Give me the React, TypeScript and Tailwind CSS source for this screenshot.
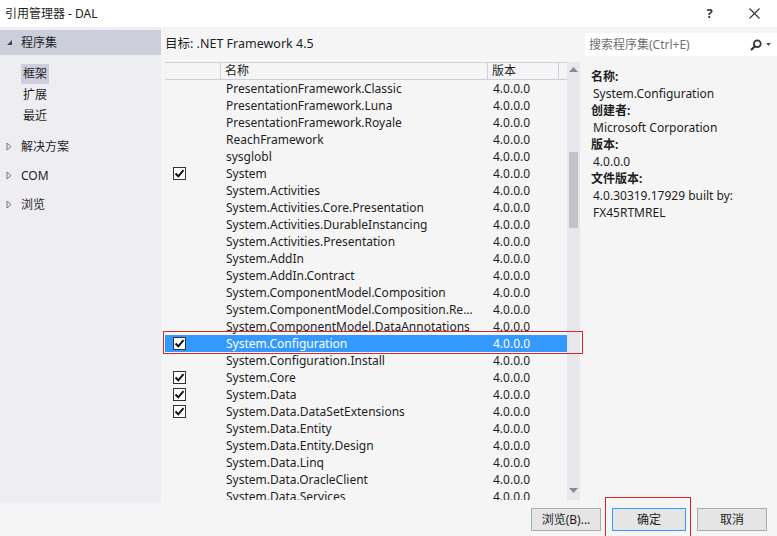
import React from "react";

const FONT = "'Noto Sans', 'Noto Sans CJK SC', sans-serif";

type Row = { name: string; checked?: boolean; selected?: boolean };

const ROWS: Row[] = [
  { name: "PresentationFramework.Classic" },
  { name: "PresentationFramework.Luna" },
  { name: "PresentationFramework.Royale" },
  { name: "ReachFramework" },
  { name: "sysglobl" },
  { name: "System", checked: true },
  { name: "System.Activities" },
  { name: "System.Activities.Core.Presentation" },
  { name: "System.Activities.DurableInstancing" },
  { name: "System.Activities.Presentation" },
  { name: "System.AddIn" },
  { name: "System.AddIn.Contract" },
  { name: "System.ComponentModel.Composition" },
  { name: "System.ComponentModel.Composition.Re..." },
  { name: "System.ComponentModel.DataAnnotations" },
  { name: "System.Configuration", checked: true, selected: true },
  { name: "System.Configuration.Install" },
  { name: "System.Core", checked: true },
  { name: "System.Data", checked: true },
  { name: "System.Data.DataSetExtensions", checked: true },
  { name: "System.Data.Entity" },
  { name: "System.Data.Entity.Design" },
  { name: "System.Data.Linq" },
  { name: "System.Data.OracleClient" },
  { name: "System.Data.Services" },
];

function CheckBox() {
  return (
    <div className="flex h-[13px] w-[13px] items-center justify-center border border-[#333] bg-white">
      <svg width="11" height="11" viewBox="0 0 11 11">
        <path d="M1.5 5.5 L4.3 8.3 L9.5 2.2" fill="none" stroke="#111" strokeWidth="2" />
      </svg>
    </div>
  );
}

function Expanded() {
  return (
    <svg width="7" height="7" viewBox="0 0 7 7">
      <path d="M6 1 L6 6 L1 6 Z" fill="#444" />
    </svg>
  );
}

function Collapsed() {
  return (
    <svg width="6" height="9" viewBox="0 0 6 9">
      <path d="M1 1 L5 4.5 L1 8 Z" fill="none" stroke="#777" strokeWidth="1" />
    </svg>
  );
}

export default function App() {
  return (
    <div
      className="relative flex h-[536px] w-[777px] flex-col overflow-hidden bg-[#f5f5f5] text-[12px] text-[#1e1e1e]"
      style={{ fontFamily: FONT }}
    >
      {/* title bar */}
      <div className="flex h-[27px] items-center bg-white pl-[5px]">
        <span className="flex-1 leading-none">引用管理器 - DAL</span>
        <span className="w-[45px] text-center text-[13px] font-bold text-[#333]">?</span>
        <span className="flex w-[45px] justify-center">
          <svg width="11" height="11" viewBox="0 0 11 11">
            <path d="M0.5 0.5 L10.5 10.5 M10.5 0.5 L0.5 10.5" stroke="#333" strokeWidth="1.1" />
          </svg>
        </span>
      </div>

      <div className="flex h-[476px]">
        {/* left tree */}
        <div className="flex w-[161px] flex-col bg-[#eeeef2]">
          <div className="mt-[3px] flex h-[25px] items-center gap-[8px] bg-[#cccedb] pl-[6px]">
            <Expanded />
            <span>程序集</span>
          </div>
          <div className="mt-[9px] flex flex-col pl-[21px]">
            <span className="flex h-[20px] w-[28px] items-center justify-center bg-[#cccedb]">框架</span>
            <span className="flex h-[21px] items-center pl-[2px]">扩展</span>
            <span className="flex h-[21px] items-center pl-[2px]">最近</span>
          </div>
          <div className="mt-[6px] flex flex-col">
            {["解决方案", "COM", "浏览"].map((t) => (
              <div key={t} className="flex h-[29px] items-center gap-[9px] pl-[6px]">
                <Collapsed />
                <span>{t}</span>
              </div>
            ))}
          </div>
        </div>

        {/* middle list */}
        <div className="flex w-[422px] flex-col">
          <div className="flex h-[35px] items-center pl-[4px] text-[12.5px]">目标: .NET Framework 4.5</div>
          <div className="flex h-[438px] pl-[4px]">
            <div className="flex flex-1 flex-col overflow-hidden border-t border-[#cccedb]">
              <div className="flex h-[17px] shrink-0 border-b border-[#cccedb] leading-[16px]">
                <div className="w-[56px] border-r border-[#cccedb]" />
                <div className="w-[267px] border-r border-[#cccedb] pl-[4px]">名称</div>
                <div className="w-[71px] border-r border-[#cccedb] pl-[4px]">版本</div>
              </div>
              {ROWS.map((r) => (
                <div
                  key={r.name}
                  className={
                    r.selected
                      ? "flex h-[17px] shrink-0 items-center bg-[#3399ff] text-white"
                      : "flex h-[17px] shrink-0 items-center"
                  }
                >
                  <div className="flex w-[57px] pl-[8px]">{r.checked ? <CheckBox /> : null}</div>
                  <div className="w-[267px] truncate pl-[4px] leading-[17px]">{r.name}</div>
                  <div className="w-[74px] pl-[4px] leading-[17px]">4.0.0.0</div>
                </div>
              ))}
            </div>
            {/* scrollbar */}
            <div className="mr-[3px] flex w-[13px] flex-col items-center bg-[#e8e8ec]">
              <svg className="mt-[5px]" width="9" height="5" viewBox="0 0 9 5">
                <path d="M0 5 L4.5 0 L9 5 Z" fill="#868999" />
              </svg>
              <div className="mt-[80px] h-[76px] w-[9px] bg-[#c2c3c9]" />
              <div className="flex-1" />
              <svg className="mb-[7px]" width="9" height="5" viewBox="0 0 9 5">
                <path d="M0 0 L9 0 L4.5 5 Z" fill="#868999" />
              </svg>
            </div>
          </div>
        </div>

        {/* right details */}
        <div className="flex flex-1 flex-col pl-[2px]">
          <div className="mt-[6px] flex h-[23px] items-center bg-white pl-[4px] pr-[6px]">
            <span className="flex-1 text-[#717171]">搜索程序集(Ctrl+E)</span>
            <svg width="12" height="12" viewBox="0 0 12 12">
              <circle cx="7.3" cy="4.7" r="3.4" fill="none" stroke="#333" strokeWidth="1.8" />
              <path d="M4.9 7.2 L1 11" stroke="#333" strokeWidth="2.2" />
            </svg>
            <svg className="ml-[4px]" width="5" height="3" viewBox="0 0 5 3">
              <path d="M0 0 L5 0 L2.5 3 Z" fill="#555" />
            </svg>
          </div>
          <div className="mt-[12px] flex flex-col pl-[6px] leading-[17px]">
            <span className="font-bold">名称:</span>
            <span className="pl-[2px]">System.Configuration</span>
            <span className="font-bold">创建者:</span>
            <span className="pl-[2px]">Microsoft Corporation</span>
            <span className="font-bold">版本:</span>
            <span className="pl-[2px]">4.0.0.0</span>
            <span className="font-bold">文件版本:</span>
            <span className="pl-[2px]">4.0.30319.17929 built by:</span>
            <span className="pl-[2px]">FX45RTMREL</span>
          </div>
        </div>
      </div>

      {/* bottom buttons */}
      <div className="flex h-[33px] items-start justify-end gap-[11px] pr-[10px] pt-[5px]">
        <button className="h-[23px] w-[70px] border border-[#acacac] bg-[#e5e5e5]">浏览(B)...</button>
        <button className="h-[23px] w-[74px] border border-[#3399ff] bg-[#e5e5e5]">确定</button>
        <button className="h-[23px] w-[70px] border border-[#acacac] bg-[#e5e5e5]">取消</button>
      </div>

      {/* red annotation boxes */}
      <div className="pointer-events-none absolute left-[163px] top-[331px] h-[23px] w-[420px] border border-[#d9262c]" />
      <div className="pointer-events-none absolute left-[605px] top-[497px] h-[40px] w-[86px] border border-[#d9262c]" />
    </div>
  );
}
